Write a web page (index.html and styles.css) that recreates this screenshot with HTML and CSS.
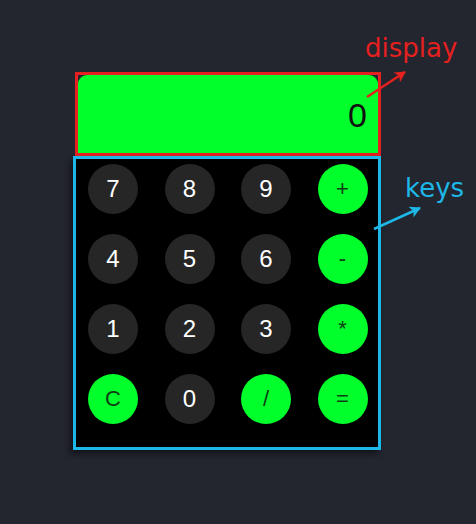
FILE: index.html
```html
<!DOCTYPE html>
<html>
<head>
<meta charset="utf-8">
<link rel="stylesheet" href="styles.css">
</head>
<body>
<main class="stage">
  <div class="calc">
    <div class="display-frame">
      <div class="display">0</div>
    </div>
    <div class="keys">
      <button class="key">7</button>
      <button class="key">8</button>
      <button class="key">9</button>
      <button class="key op">+</button>
      <button class="key">4</button>
      <button class="key">5</button>
      <button class="key">6</button>
      <button class="key op">-</button>
      <button class="key">1</button>
      <button class="key">2</button>
      <button class="key">3</button>
      <button class="key op">*</button>
      <button class="key op">C</button>
      <button class="key">0</button>
      <button class="key op">/</button>
      <button class="key op">=</button>
    </div>
  </div>
  <span class="note note-display">display</span>
  <span class="note note-keys">keys</span>
  <svg class="arrows" width="476" height="524" viewBox="0 0 476 524">
    <defs>
      <marker id="ar" markerWidth="12" markerHeight="12" refX="10" refY="6" orient="auto" markerUnits="userSpaceOnUse">
        <path d="M0,0 L11,6 L0,12 L3,6 Z" fill="#e5211f"/>
      </marker>
      <marker id="ab" markerWidth="12" markerHeight="12" refX="10" refY="6" orient="auto" markerUnits="userSpaceOnUse">
        <path d="M0,0 L11,6 L0,12 L3,6 Z" fill="#1db7e8"/>
      </marker>
    </defs>
    <line x1="367" y1="97" x2="405" y2="72" stroke="#e5211f" stroke-width="2.5" marker-end="url(#ar)"/>
    <line x1="374" y1="229" x2="420" y2="208" stroke="#1db7e8" stroke-width="2.5" marker-end="url(#ab)"/>
  </svg>
</main>
</body>
</html>
```
FILE: styles.css
```css
* { box-sizing: border-box; }
html, body {
  margin: 0;
  padding: 0;
  background: #23252f;
}
.stage {
  position: relative;
  width: 476px;
  height: 524px;
  padding: 72px 0 0 73px;
  font-family: "Liberation Sans", Arial, sans-serif;
}
.calc {
  width: 308px;
  display: flex;
  flex-direction: column;
}
.display-frame {
  margin-left: 2px;
  width: 306px;
  height: 84px;
  border: 3px solid #e5211f;
}
.display {
  height: 78px;
  background: #00ff2b;
  border-radius: 9px 9px 0 0;
  text-align: right;
  padding: 20px 11px 0 0;
  font-size: 34px;
  line-height: 40px;
  color: #111;
}
.keys {
  width: 308px;
  height: 294px;
  border: 3px solid #1db7e8;
  background: #000;
  display: grid;
  grid-template-columns: repeat(4, 50px);
  grid-auto-rows: 50px;
  column-gap: 26.5px;
  row-gap: 20px;
  padding: 5px 11px 0 12px;
  box-shadow: -3px 4px 6px rgba(0, 0, 0, 0.45);
}
.key {
  width: 50px;
  height: 50px;
  border: none;
  border-radius: 50%;
  background: #262626;
  color: #fff;
  font-family: "Liberation Sans", Arial, sans-serif;
  font-size: 24px;
  display: flex;
  align-items: center;
  justify-content: center;
  padding: 0;
}
.key.op {
  background: #00ff2b;
  color: #0f3d14;
  font-size: 22px;
}
.note {
  position: absolute;
  font-family: "DejaVu Sans", sans-serif;
  font-size: 26px;
  line-height: 30px;
}
.note-display {
  left: 365px;
  top: 33px;
  color: #e5211f;
}
.note-keys {
  left: 405px;
  top: 173px;
  color: #1db7e8;
}
.arrows {
  position: absolute;
  left: 0;
  top: 0;
  pointer-events: none;
}
```
